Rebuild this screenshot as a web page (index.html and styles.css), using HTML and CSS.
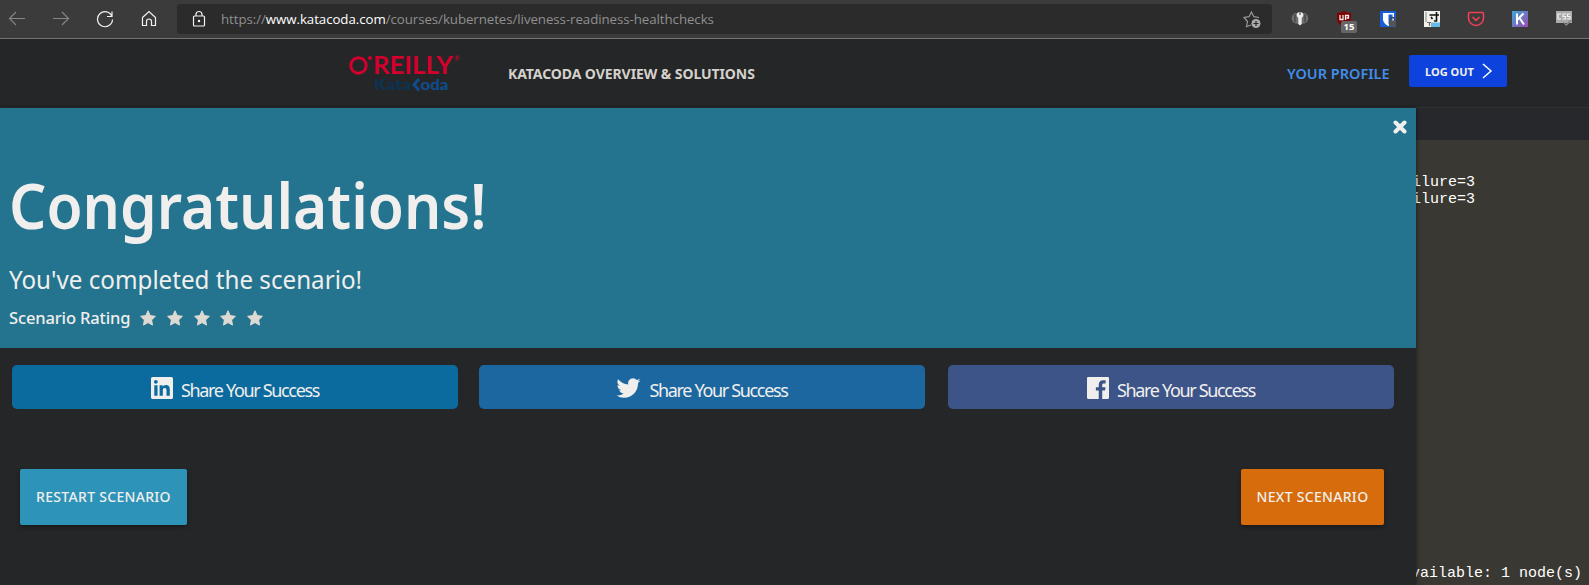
FILE: index.html
```html
<!DOCTYPE html>
<html lang="en">
<head>
<meta charset="utf-8">
<title>Katacoda</title>
<link rel="stylesheet" href="styles.css">
</head>
<body>
<div class="toolbar">
  <div class="nav">
    <svg class="dim" width="18" height="18" viewBox="0 0 18 18"><path d="M17 8.500H1.500M8 2 1.500 8.500 8 15"/></svg>
    <svg class="dim" width="18" height="18" viewBox="0 0 18 18"><path d="M1 8.500h15.500M10 2l6.500 6.500L10 15"/></svg>
    <svg width="18" height="18" viewBox="0 0 18 18"><path d="M16 6.500A7.500 7.500 0 1 0 16.500 9.500M16 1.500v5h-5"/></svg>
    <svg width="18" height="18" viewBox="0 0 18 18"><path d="M2.500 7.500 9 1.500l6.500 6V15.500H11.500v-4a2.500 2.500 0 0 0-5 0v4h-4z"/></svg>
  </div>
  <div class="address">
    <svg class="lock" width="14" height="18" viewBox="0 0 14 18"><rect x="1.500" y="6" width="11" height="10" rx="1"/><path d="M4 6V4.500a3 3 0 0 1 6 0V6"/><circle cx="7" cy="11" r=".6"/></svg>
    <span class="url">https://<b>www.katacoda.com</b>/courses/kubernetes/liveness-readiness-healthchecks</span>
    <svg class="fav" width="18" height="18" viewBox="0 0 18 18"><path d="M8 15 3.500 16.500l1-5L1 7.500l5-.8L8.500 2l2.300 4.700L16 7.500"/><circle cx="13" cy="13.500" r="4.500" fill="#aaa" stroke="none"/><path d="M13 11v5M10.500 13.500h5" stroke="#2b2b2b"/></svg>
  </div>
  <div class="extensions">
    <svg width="18" height="18" viewBox="0 0 18 18"><g stroke="none"><path fill="#6d6d6d" d="M4 3C0 5 0 10 2 12c2 2.500 12 2.500 14 0 2-2 2-7-2-9z"/><path d="M4 4v8M14 4v8" stroke="#3b3b3b" stroke-width="1"/><path fill="#eee" d="M9 2a3.200 3.200 0 0 0-1.700 6V14l1.700 1.500 1.700-1.500V8A3.200 3.200 0 0 0 9 2z"/><path fill="#333" d="M8.500 2h1v3h-1z"/></g></svg>
    <div class="ublock"><svg width="18" height="18" viewBox="0 0 18 18"><path fill="#800000" stroke="none" d="M2 3q4 0 7-2 3 2 7 2v6q-1 6-7 8-6-2-7-8z"/><path d="M5 5v4.500h3V5M10.500 10V5.500h3V8h-2" stroke-width="1.300"/></svg><span class="count">15</span></div>
    <svg width="18" height="18" viewBox="0 0 18 18"><g stroke="none"><rect x="1" y="1" width="16" height="16" rx="1" fill="#175ddc"/><path fill="#fff" d="M4 3h11v7q-1 4-5.500 6Q5 14 4 10z"/><path fill="#175ddc" d="M9.500 4.500h4V10q-1 3-4 4.500z"/><path d="M11.500 11V9.500a2 2 0 0 1 4 0V11" stroke="#444" stroke-width="1.300"/><path fill="#555" d="M10 10.500h7V16.500h-7z"/></g></svg>
    <svg width="18" height="18" viewBox="0 0 18 18"><g stroke="none"><path fill="#f3f1ec" d="M1 1h16v16H1z"/><path fill="#69b8e5" d="M8 12.500h9V17H8z"/><path d="M6.500 5H16M13.500 2v9H11M8 7l1.500 2" stroke="#111" stroke-width="1.600"/><path fill="#bbb" d="M2 2h2v10H2z"/><path d="M4 12.500h4M6.500 12v4" stroke="#765"/></g></svg>
    <svg width="18" height="18" viewBox="0 0 18 18"><path stroke="#ef4056" stroke-width="1.600" d="M2.500 2.500h13q1 0 1 1V8a7.500 7.500 0 0 1-15 0V3.500q0-1 1-1zM5.500 7 9 10.300 12.500 7"/></svg>
    <svg width="18" height="18" viewBox="0 0 18 18"><defs><linearGradient id="kg" x2="1" y2="1"><stop stop-color="#3da6d5"/><stop offset="1" stop-color="#9a4cb2"/></linearGradient></defs><path fill="url(#kg)" stroke="none" d="M1 1h16v16H1z"/><path d="M6 3.500v11M12.500 3.500 6.500 9.500M8.500 8l4.500 6.500" stroke="#fff" stroke-width="2"/></svg>
    <svg width="18" height="18" viewBox="0 0 18 18"><g stroke="none"><path fill="#aaa" d="M1 1h16v12H1z"/><path fill="#888" d="m7 11 4 3 4-4 2 1-6 5z"/></g><path stroke-width="1.200" d="M6 4H3v5h3M11 4H8v2.500h2.500V9H7.500M15.500 4h-3v2.500h2.500V9h-3"/></svg>
  </div>
</div>
<header class="site">
  <svg class="logo" width="116" height="40" viewBox="0 0 116 40">
    <circle cx="9.500" cy="11.500" r="7.700" fill="none" stroke="#d3002d" stroke-width="3"/>
    <circle cx="21" cy="4" r="2" fill="#d3002d"/>
    <text class="oreilly" x="24" y="20" textLength="80" lengthAdjust="spacingAndGlyphs">REILLY</text>
    <text class="reg" x="105" y="7">®</text>
    <text class="kata" x="25" y="35.500" textLength="37" lengthAdjust="spacingAndGlyphs">Kata</text>
    <path d="m70 25-5 5.500 5 6" fill="none" stroke="#0f4c8a" stroke-width="3"/>
    <text class="koda" x="71.500" y="35.500" textLength="28" lengthAdjust="spacingAndGlyphs">oda</text>
  </svg>
  <a class="overview">KATACODA OVERVIEW &amp; SOLUTIONS</a>
  <a class="profile">YOUR PROFILE</a>
  <a class="logout">LOG OUT <svg width="12" height="18" viewBox="0 0 12 18"><path d="m2 2 8 7-8 7"/></svg></a>
</header>
<main class="main">
  <section class="modal">
    <div class="hero">
      <svg class="close" width="14" height="14" viewBox="0 0 14 14"><path d="m2.500 2.500 9 9m0-9-9 9"/></svg>
      <h1>Congratulations!</h1>
      <h2>You've completed the scenario!</h2>
      <div class="rating"><span class="rating-label">Scenario Rating</span>
        <div class="stars">
          <svg viewBox="0 0 16 16"><path d="m8 .8 2.200 4.800 5.200.7-3.800 3.600.9 5.200L8 12.600l-4.500 2.500.9-5.200L.6 6.300l5.200-.7z"/></svg>
          <svg viewBox="0 0 16 16"><path d="m8 .8 2.200 4.800 5.200.7-3.800 3.600.9 5.200L8 12.600l-4.500 2.500.9-5.200L.6 6.300l5.200-.7z"/></svg>
          <svg viewBox="0 0 16 16"><path d="m8 .8 2.200 4.800 5.200.7-3.800 3.600.9 5.200L8 12.600l-4.500 2.500.9-5.200L.6 6.300l5.200-.7z"/></svg>
          <svg viewBox="0 0 16 16"><path d="m8 .8 2.200 4.800 5.200.7-3.800 3.600.9 5.200L8 12.600l-4.500 2.500.9-5.200L.6 6.300l5.200-.7z"/></svg>
          <svg viewBox="0 0 16 16"><path d="m8 .8 2.200 4.800 5.200.7-3.800 3.600.9 5.200L8 12.600l-4.500 2.500.9-5.200L.6 6.300l5.200-.7z"/></svg>
        </div>
      </div>
    </div>
    <div class="shares">
      <a class="share linkedin"><svg width="22" height="22" viewBox="0 0 24 24"><path d="M22.200 0H1.800C.8 0 0 .8 0 1.700v20.600c0 .9.800 1.700 1.800 1.700h20.400c1 0 1.800-.8 1.800-1.700V1.700C24 .8 23.200 0 22.200 0zM7.100 20.500H3.600V9h3.500zM5.300 7.400a2.100 2.100 0 1 1 0-4.200 2.100 2.100 0 0 1 0 4.200zm15.200 13.100h-3.600v-5.600c0-1.300 0-3-1.800-3s-2.200 1.400-2.200 2.900v5.700H9.400V9h3.400v1.600c.5-.9 1.600-1.900 3.400-1.900 3.600 0 4.300 2.400 4.300 5.500z"/></svg><span>Share Your Success</span></a>
      <a class="share twitter"><svg width="25" height="22" viewBox="0 1 24 22"><path d="M24 4.600a10 10 0 0 1-2.800.8 4.900 4.900 0 0 0 2.100-2.700 10 10 0 0 1-3.100 1.200 4.900 4.900 0 0 0-8.400 4.500A14 14 0 0 1 1.700 3.200a4.900 4.900 0 0 0 1.500 6.500 4.900 4.900 0 0 1-2.200-.6v.1a4.900 4.900 0 0 0 3.900 4.800 5 5 0 0 1-2.200.1 4.900 4.900 0 0 0 4.600 3.400A9.900 9.900 0 0 1 0 19.500 14 14 0 0 0 7.500 21.700c9.100 0 14-7.500 14-14v-.6A10 10 0 0 0 24 4.600z"/></svg><span>Share Your Success</span></a>
      <a class="share facebook"><svg width="22" height="22" viewBox="0 0 24 24"><path d="M22.700 0H1.300C.6 0 0 .6 0 1.300v21.400c0 .7.600 1.300 1.300 1.300h11.500v-9.300H9.700v-3.600h3.100V8.400c0-3.100 1.900-4.800 4.700-4.800 1.300 0 2.500.1 2.800.2V7h-1.900c-1.500 0-1.800.7-1.800 1.800v2.300h3.600l-.5 3.600h-3.100V24h6.100c.7 0 1.300-.6 1.300-1.300V1.300C24 .6 23.400 0 22.700 0z"/></svg><span>Share Your Success</span></a>
    </div>
    <div class="actions"><a class="btn restart"><span>RESTART SCENARIO</span></a><a class="btn next"><span>NEXT SCENARIO</span></a></div>
  </section>
  <aside class="terminal">
    <div class="tabs"></div>
    <div class="screen"><div class="out"><p>ilure=3</p><p>ilure=3</p></div><p class="last">vailable: 1 node(s)</p></div>
  </aside>
</main>
</body>
</html>
```
FILE: styles.css
```css
* { box-sizing: border-box; }
body { margin: 0; width: 1589px; height: 585px; overflow: hidden; display: flex; flex-direction: column; background: #252628; color: #f0efed; font-family: "Noto Sans", "Open Sans", sans-serif; }
h1, h2, p { margin: 0; }
svg { display: block; flex: none; fill: none; }

.toolbar { height: 39px; flex: none; display: flex; align-items: flex-start; background: #3b3b3b; border-bottom: 1px solid #737373; }
.toolbar svg { stroke: #f2f2f2; stroke-width: 1.2; }
.nav { width: 177px; padding: 10px 0 0 8px; display: flex; gap: 26px; }
.nav .dim { stroke: #858585; }
.address { width: 1095px; height: 30px; margin-top: 4px; padding: 0 11px 0 15px; display: flex; align-items: center; border-radius: 3px; background: #2b2b2b; }
.url { margin-left: 15px; font-family: "Open Sans", sans-serif; font-size: 13.3px; letter-spacing: -.07px; color: #8f8f8f; white-space: nowrap; }
.url b { font-weight: 400; color: #fff; }
.address .fav { margin-left: auto; stroke: #999; }
.extensions { padding: 10px 0 0 19px; display: flex; gap: 26px; }
.ublock { position: relative; }
.count { position: absolute; left: 6px; top: 11px; width: 16px; height: 12px; border-radius: 2px; background: #666; color: #fff; font-size: 9.5px; font-weight: 700; line-height: 12px; text-align: center; }

.site { height: 69px; flex: none; display: flex; align-items: flex-start; border-bottom: 1px solid #2f3032; white-space: nowrap; }
.logo { margin: 15px 0 0 349px; }
.logo text { font-family: Lato, sans-serif; font-weight: 700; stroke: none; }
.logo .oreilly { font-size: 24px; fill: #d3002d; }
.logo .reg { font-size: 7px; fill: #d3002d; font-weight: 400; }
.logo .kata { font-size: 15px; fill: #0c3353; font-weight: 900; }
.logo .koda { font-size: 15px; fill: #0f4c8a; font-weight: 900; }
.overview { width: 248px; margin: 25px 0 0 43px; font-size: 14px; line-height: 20px; font-weight: 700; letter-spacing: -.08px; color: #d5d2cc; }
.profile { width: 106px; margin: 24px 0 0 531px; font-size: 14.5px; line-height: 20px; font-weight: 600; color: #418eea; }
.logout { width: 98px; height: 32px; margin: 16px 0 0 16px; padding-left: 16px; display: flex; align-items: center; gap: 7px; border-radius: 2px; background: #0d43dc; font-size: 11px; font-weight: 700; }
.logout svg { stroke: #fff; stroke-width: 1.5; }

.main { flex: 1; display: flex; min-height: 0; }
.modal { position: relative; width: 1416px; flex: none; box-shadow: 0 0 4px rgba(0, 0, 0, .6); background: #252628; }
.hero { position: relative; height: 240px; padding: 57px 0 0 9px; background: #24748f; white-space: nowrap; }
.close { position: absolute; right: 9px; top: 12px; stroke: #f0efed; stroke-width: 4; stroke-linecap: round; }
h1 { width: max-content; font-size: 64px; line-height: 80px; font-weight: 600; transform: scaleX(.916); transform-origin: 0 0; }
h2 { width: max-content; margin-top: 16px; font-size: 25px; line-height: 36px; font-weight: 400; transform: scaleX(.967); transform-origin: 0 0; }
.rating { height: 24px; margin-top: 8px; display: flex; align-items: center; }
.rating-label { width: 131px; font-size: 16.5px; font-weight: 500; letter-spacing: -.14px; }
.stars { padding-top: 2px; display: flex; gap: 10.8px; }
.stars svg { width: 16px; height: 16px; fill: #dddad4; stroke: #dddad4; stroke-linejoin: round; }
.shares { height: 121px; padding: 17px 22px 0 12px; display: flex; }
.share { width: 446px; height: 44px; display: flex; align-items: center; justify-content: center; gap: 8px; border-radius: 5px; font-size: 18px; font-weight: 450; letter-spacing: -1.33px; white-space: nowrap; }
.share svg { fill: #f0efed; margin-top: 2px; }
.share span { padding-top: 5px; }
.linkedin { background: #0c6b9e; }
.twitter { margin: 0 23px 0 21px; background: #1d67a1; }
.facebook { background: #3d5488; }
.actions { padding: 0 32px 0 20px; display: flex; justify-content: space-between; }
.btn { height: 56px; padding-bottom: 1px; display: flex; align-items: center; justify-content: center; border-radius: 2px; box-shadow: 0 2px 4px rgba(0, 0, 0, .35); font-size: 14px; font-weight: 500; letter-spacing: .3px; white-space: nowrap; }
.restart { width: 167px; background: #2e93b8; }
.next { width: 143px; background: #d66c0c; }

.terminal { flex: 1; min-width: 0; overflow: hidden; display: flex; flex-direction: column; }
.tabs { height: 32px; background: #27282b; }
.screen { flex: 1; padding: 34px 0 3px; display: flex; flex-direction: column; justify-content: space-between; background: #393832; color: #fff; font: 15px/17px "Liberation Mono", monospace; white-space: nowrap; }
.out p { margin-left: -4px; }
.last { margin-left: -5px; }
```
